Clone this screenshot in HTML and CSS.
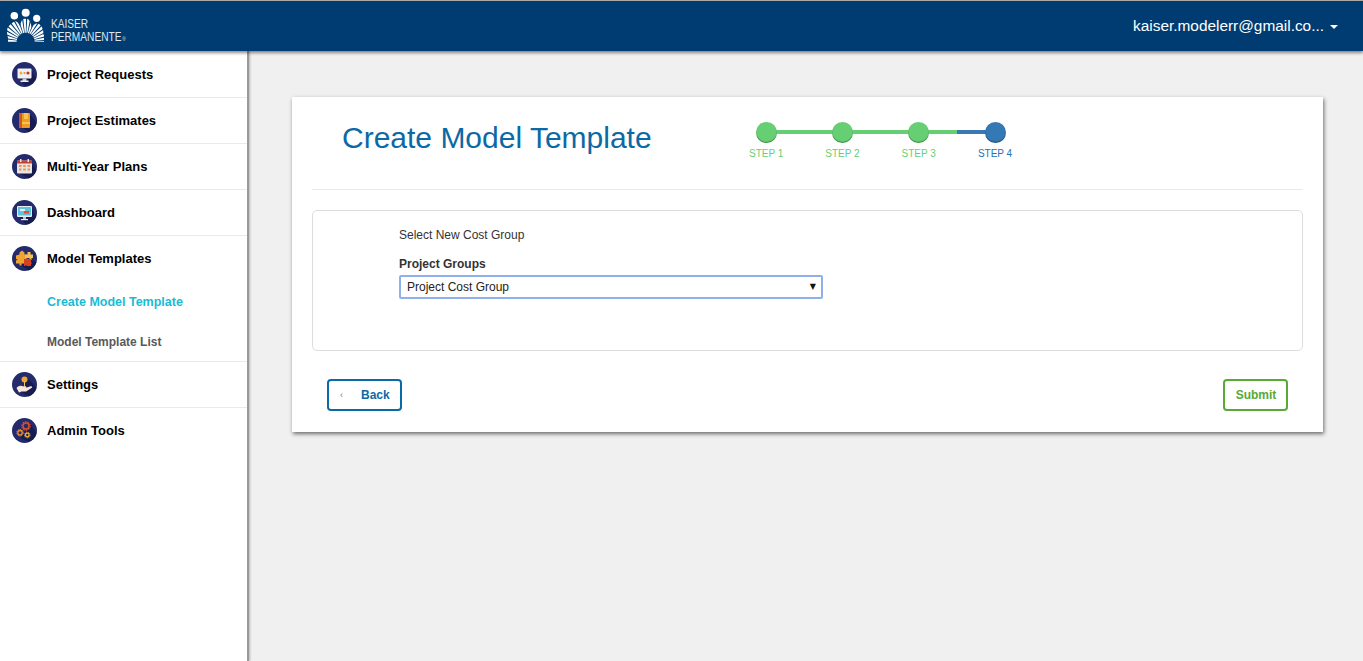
FILE: index.html
```html
<!DOCTYPE HTML>
<html>
<head>
  <meta charset="UTF-8">
  <title>Create Model Template</title>
  <link rel="stylesheet" href="styles.css">
</head>
<body>

  <header class="topbar">
    <div class="logo">
      <svg class="logo-mark" width="50" height="46" viewBox="0 1 50 46">
        <defs>
          <clipPath id="lobes">
            <ellipse cx="14" cy="32" rx="7" ry="11"/>
            <ellipse cx="25.700" cy="30" rx="6" ry="12"/>
            <ellipse cx="37" cy="34" rx="6.500" ry="10.500"/>
            <rect x="8" y="35" width="36" height="7"/>
          </clipPath>
        </defs>
        <circle cx="14.300" cy="15.700" r="3.800" fill="#fff"/>
        <circle cx="25.700" cy="12.700" r="4" fill="#fff"/>
        <circle cx="36.700" cy="18.300" r="3.600" fill="#fff"/>
        <path d="M9.700 41.700 A16 16 0 0 1 41.700 41.700" fill="none" stroke="#fff" stroke-width="14" stroke-dasharray="2 .9" clip-path="url(#lobes)"/>
      </svg>
      <div class="logo-text">
        <span>KAISER</span>
        <span>PERMANENTE<small>®</small></span>
      </div>
    </div>
    <div class="user-menu">
      <span>kaiser.modelerr@gmail.co...</span>
      <i class="caret"></i>
    </div>
  </header>

  <div class="layout">
    <nav class="sidebar">
      <a class="nav-item">
        <svg class="nav-icon" viewBox="0 0 25 25">
          <circle cx="12.500" cy="12.500" r="12.500" fill="#232b6c"/>
          <path d="M8 16l5 8a12.500 12.500 0 0 0 11-8l-5-8z" fill="#171c50"/>
          <rect x="5.500" y="6.500" width="14" height="10" rx="1" fill="#eef0f2"/>
          <rect x="10.500" y="16.500" width="4" height="2.500" fill="#c9ced6"/>
          <rect x="8.500" y="18.500" width="8" height="1.500" fill="#eef0f2"/>
          <circle cx="9" cy="11" r="1.500" fill="#f0b13c"/>
          <circle cx="12.500" cy="11" r="1" fill="#e98b3a"/>
          <circle cx="16" cy="11" r="1.600" fill="#c9352e"/>
        </svg>
        <span>Project Requests</span>
      </a>
      <a class="nav-item">
        <svg class="nav-icon" viewBox="0 0 25 25">
          <circle cx="12.500" cy="12.500" r="12.500" fill="#232b6c"/>
          <path d="M18 6l6.500 9a12.500 12.500 0 0 1-8 9l-7-5z" fill="#171c50"/>
          <rect x="7" y="5" width="11" height="15" rx="1" fill="#ef9a26"/>
          <rect x="7" y="5" width="3" height="15" fill="#d4591f"/>
          <rect x="12" y="5" width="4" height="6" fill="#f6c64c"/>
          <rect x="10" y="14" width="8" height="2" fill="#f6c64c"/>
        </svg>
        <span>Project Estimates</span>
      </a>
      <a class="nav-item">
        <svg class="nav-icon" viewBox="0 0 25 25">
          <circle cx="12.500" cy="12.500" r="12.500" fill="#232b6c"/>
          <path d="M19 9l5.500 7a12.500 12.500 0 0 1-8 8.500l-9-5z" fill="#171c50"/>
          <rect x="5" y="6.500" width="15" height="13" rx="1" fill="#e9e4de"/>
          <rect x="5" y="6.500" width="15" height="3" fill="#c8402f"/>
          <rect x="8" y="5" width="1.500" height="3" fill="#e9e4de"/>
          <rect x="15.500" y="5" width="1.500" height="3" fill="#e9e4de"/>
          <path d="M7 11h2.500v2H7zM11.200 11h2.500v2h-2.500zM15.500 11H18v2h-2.500zM7 14.500h2.500v2H7zM11.200 14.500h2.500v2h-2.500zM15.500 14.500H18v2h-2.500z" fill="#e8935a"/>
        </svg>
        <span>Multi-Year Plans</span>
      </a>
      <a class="nav-item">
        <svg class="nav-icon" viewBox="0 0 25 25">
          <circle cx="12.500" cy="12.500" r="12.500" fill="#232b6c"/>
          <path d="M8 17l6 7.500a12.500 12.500 0 0 0 10-8l-4.500-9z" fill="#171c50"/>
          <rect x="5" y="6" width="15" height="11" rx="1" fill="#e9eef2"/>
          <rect x="6" y="7" width="13" height="8.500" fill="#5fc3dc"/>
          <rect x="8" y="9" width="5" height="2" fill="#e8eef2"/>
          <rect x="12" y="11" width="5" height="2.500" fill="#df4f3c"/>
          <rect x="11" y="17" width="3" height="2" fill="#b9c1c9"/>
          <rect x="9" y="19" width="7" height="1.200" fill="#e9eef2"/>
        </svg>
        <span>Dashboard</span>
      </a>
      <a class="nav-item open">
        <svg class="nav-icon" viewBox="0 0 25 25">
          <circle cx="12.500" cy="12.500" r="12.500" fill="#232b6c"/>
          <path d="M18 14l6.500 2a12.500 12.500 0 0 1-8 8.500l-7-5z" fill="#171c50"/>
          <path d="M4 9.500l3.500-1V6.500l2.500-2 2.500 2v2h2v9H9.500v2h-2v-2H4v-3l2-.8-2-.8z" fill="#f0a431"/>
          <path d="M13 8.500h2.500V6h3v2.500H21v3.500h-1.500v2h-2v-2H13z" fill="#f6c14a"/>
          <path d="M12 13h2l1-1 1 1h3v3l1 1-1 1v2h-4l-1-1-1 1h-1z" fill="#d9401f"/>
        </svg>
        <span>Model Templates</span>
      </a>
      <div class="subnav">
        <a class="subnav-link active">Create Model Template</a>
        <a class="subnav-link">Model Template List</a>
      </div>
      <a class="nav-item">
        <svg class="nav-icon" viewBox="0 0 25 25">
          <circle cx="12.500" cy="12.500" r="12.500" fill="#232b6c"/>
          <path d="M16 6l8.500 10a12.500 12.500 0 0 1-8 8.500l-8-5z" fill="#171c50"/>
          <circle cx="12.500" cy="7.500" r="3" fill="#f0a431"/>
          <rect x="12" y="9.500" width="1" height="5" fill="#f6c64c"/>
          <path d="M4.500 16c2-2.300 4-2.800 6-1.800h3c1.200 0 1.200 1.800 0 1.800l5-1.800c1.800-.4 2.300 1 1 1.800l-5.500 3.500H9.500l-2.500 1z" fill="#f8e6d8"/>
        </svg>
        <span>Settings</span>
      </a>
      <a class="nav-item">
        <svg class="nav-icon" viewBox="0 0 25 25">
          <circle cx="12.500" cy="12.500" r="12.500" fill="#232b6c"/>
          <path d="M18 6l6.500 9a12.500 12.500 0 0 1-8 9l-8-4z" fill="#171c50"/>
          <circle cx="14" cy="8" r="3" fill="none" stroke="#d9502c" stroke-width="1.500"/>
          <circle cx="14" cy="8" r="4.200" fill="none" stroke="#d9502c" stroke-width="1.200" stroke-dasharray="1.500 1.100"/>
          <circle cx="8" cy="14.700" r="2.200" fill="none" stroke="#ef8a2c" stroke-width="1.300"/>
          <circle cx="8" cy="14.700" r="3.200" fill="none" stroke="#ef8a2c" stroke-width="1" stroke-dasharray="1.300 .8"/>
          <circle cx="15.300" cy="17" r="1.800" fill="none" stroke="#f0b13c" stroke-width="1.300"/>
          <circle cx="15.300" cy="17" r="2.800" fill="none" stroke="#f0b13c" stroke-width=".9" stroke-dasharray="1.200 .7"/>
        </svg>
        <span>Admin Tools</span>
      </a>
    </nav>

    <main class="content">
      <section class="card">
        <div class="card-head">
          <h1 class="page-title">Create Model Template</h1>
          <div class="stepper">
            <div class="step done"><b></b><span>STEP 1</span></div>
            <div class="step done"><b></b><span>STEP 2</span></div>
            <div class="step done half"><b></b><span>STEP 3</span></div>
            <div class="step current"><b></b><span>STEP 4</span></div>
          </div>
        </div>

        <div class="panel">
          <p class="panel-note">Select New Cost Group</p>
          <label class="field-label" for="groups">Project Groups</label>
          <div class="select-wrap">
            <select id="groups" class="select">
              <option>Project Cost Group</option>
            </select>
            <span class="select-arrow">▼</span>
          </div>
        </div>

        <div class="actions">
          <button class="btn btn-back"><span class="chev">‹</span>Back</button>
          <button class="btn btn-submit">Submit</button>
        </div>
      </section>
    </main>
  </div>

</body>
</html>
```

FILE: styles.css
```css
* {
  box-sizing: border-box;
}
html, body {
  height: 100%;
}
body {
  margin: 0;
  font-family: "Liberation Sans", Arial, sans-serif;
  background-color: #f0f0f0;
  overflow: hidden;
}

/* top bar */
.topbar {
  position: relative;
  z-index: 2;
  height: 51px;
  display: flex;
  align-items: center;
  justify-content: space-between;
  background-color: #003c71;
  border-top: 1px solid #aaa;
  box-shadow: 0 2px 3px rgba(0, 0, 0, .45);
  color: #fff;
}
.logo {
  display: flex;
  align-items: flex-start;
  height: 50px;
}
.logo-mark {
  display: block;
}
.logo-text {
  display: flex;
  flex-direction: column;
  margin: 16px 0 0 1px;
  font-size: 13px;
  line-height: 13px;
  color: #dfe7ef;
  transform: scaleX(.78);
  transform-origin: left;
}
.logo-text small {
  font-size: 6px;
  margin-left: 1px;
}
.user-menu {
  display: flex;
  align-items: center;
  padding-right: 25px;
  font-size: 15.4px;
}
.caret {
  margin: 2px 0 0 6px;
  border-top: 4px solid #fff;
  border-left: 4px solid transparent;
  border-right: 4px solid transparent;
}

/* sidebar */
.layout {
  display: flex;
  height: calc(100% - 51px);
}
.sidebar {
  width: 249px;
  flex-shrink: 0;
  padding-top: 1px;
  background-color: #fff;
  border-right: 2px solid #999;
  box-shadow: 1px 0 2px rgba(0, 0, 0, .25);
}
.nav-item {
  display: flex;
  align-items: center;
  height: 46px;
  padding-left: 12px;
  border-bottom: 1px solid #eaeaea;
  font-size: 13px;
  font-weight: bold;
  color: #000;
}
.nav-item.open,
.nav-item:last-child {
  border-bottom-color: transparent;
}
.nav-icon {
  width: 25px;
  height: 25px;
  margin-right: 10px;
  flex-shrink: 0;
}
.subnav {
  display: flex;
  flex-direction: column;
  height: 80px;
  padding-top: 1px;
  border-bottom: 1px solid #eaeaea;
}
.subnav-link {
  height: 39px;
  line-height: 40px;
  padding-left: 47px;
  font-size: 12px;
  font-weight: bold;
  color: #58595b;
}
.subnav-link.active {
  line-height: 39px;
  font-size: 12.5px;
  color: #17bcd6;
}

/* main card */
.content {
  flex: 1;
  padding: 46px 40px 0 43px;
}
.card {
  background-color: #fff;
  padding: 0 20px 21px;
  box-shadow: 1px 2px 4px rgba(0, 0, 0, .55);
}
.card-head {
  display: flex;
  height: 93px;
  border-bottom: 1px solid #eaeaea;
}
.page-title {
  width: 416px;
  margin: 23px 0 0;
  padding-left: 30px;
  font-size: 30px;
  line-height: 36px;
  font-weight: normal;
  color: #0b69a5;
}
.stepper {
  display: flex;
  padding-top: 25px;
}
.step {
  position: relative;
  width: 76.3px;
  display: flex;
  flex-direction: column;
  align-items: center;
}
.step b {
  position: relative;
  z-index: 1;
  width: 21px;
  height: 21px;
  border-radius: 50%;
  background-color: #66cf73;
  box-shadow: inset 0 -1px 1px rgba(0, 0, 0, .35);
}
.step span {
  margin-top: 5px;
  font-size: 10px;
  line-height: 12px;
  color: #66cf73;
}
.step.done::after {
  content: "";
  position: absolute;
  top: 8px;
  left: 50%;
  width: 100%;
  height: 4px;
  background-color: #66cf73;
}
.step.half::after {
  background: linear-gradient(to right, #66cf73 50%, #3a78b5 50%);
}
.step.current b {
  background-color: #3478b4;
}
.step.current span {
  color: #1f72b3;
}

/* form panel */
.panel {
  height: 141px;
  margin-top: 20px;
  padding: 17px 0 0 86px;
  border: 1px solid #ddd;
  border-radius: 5px;
  font-size: 12px;
}
.panel-note {
  margin: 0 0 15px;
  line-height: 14px;
  color: #333;
}
.field-label {
  display: block;
  margin-bottom: 4px;
  line-height: 14px;
  font-weight: bold;
  color: #333;
}
.select-wrap {
  position: relative;
  width: 424px;
}
.select {
  display: block;
  width: 100%;
  height: 24px;
  padding: 0 6px;
  appearance: none;
  background-color: #fff;
  border: 2px solid #8fb0ea;
  border-radius: 2px;
  font-family: inherit;
  font-size: 12px;
  color: #222;
}
.select-arrow {
  position: absolute;
  top: 7px;
  right: 7px;
  font-family: "DejaVu Sans", sans-serif;
  font-size: 8px;
  line-height: 10px;
  color: #111;
}

/* buttons */
.actions {
  display: flex;
  justify-content: space-between;
  padding: 28px 15px 0;
}
.btn {
  height: 32px;
  background-color: #fff;
  border-radius: 4px;
  font-family: inherit;
  font-size: 12px;
  font-weight: bold;
}
.btn-back {
  width: 75px;
  padding: 0 0 0 11px;
  display: flex;
  align-items: center;
  border: 2px solid #0b69a5;
  color: #0b69a5;
}
.chev {
  width: 21px;
  text-align: left;
  font-size: 9px;
  font-weight: normal;
  color: #7a6fb0;
}
.btn-submit {
  width: 65px;
  padding: 0 0 0 1px;
  border: 2px solid #58a935;
  color: #58a935;
}
```
